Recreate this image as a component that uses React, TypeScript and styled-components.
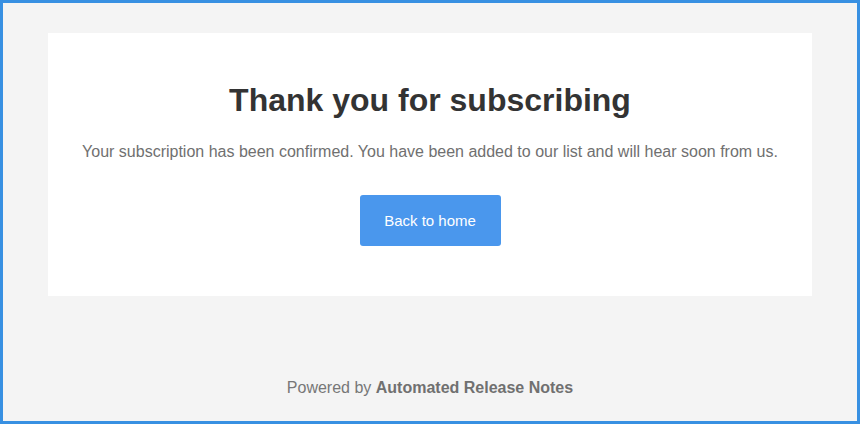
import React from "react";
import styled, { createGlobalStyle } from "styled-components";

const Global = createGlobalStyle`
  html, body { margin: 0; padding: 0; }
  body { font-family: "Liberation Sans", Arial, sans-serif; background: #f4f4f4; }
  * { box-sizing: border-box; }
`;

const Frame = styled.div`
  width: 860px;
  height: 424px;
  border: 3px solid #3890e2;
  background: #f4f4f4;
  display: flex;
  flex-direction: column;
  align-items: center;
  padding: 30px 45px 0;
`;

const Card = styled.div`
  width: 764px;
  height: 263px;
  background: #ffffff;
  display: flex;
  flex-direction: column;
  align-items: center;
  padding-top: 47px;
`;

const Title = styled.h1`
  margin: 0;
  font-size: 32px;
  line-height: 40px;
  font-weight: 700;
  color: #333333;
`;

const Message = styled.p`
  margin: 21px 0 0;
  font-size: 16px;
  line-height: 22px;
  color: #707070;
`;

const HomeButton = styled.a`
  margin-top: 32px;
  width: 141px;
  height: 51px;
  display: flex;
  align-items: center;
  justify-content: center;
  background: #4a97ed;
  color: #ffffff;
  border-radius: 3px;
  font-size: 15px;
  text-decoration: none;
`;

const Footer = styled.div`
  margin-top: 82px;
  font-size: 16px;
  line-height: 20px;
  color: #777777;
  strong { font-weight: 700; color: #707070; }
`;

export default function App() {
  return (
    <>
      <Global />
      <Frame>
        <Card>
          <Title>Thank you for subscribing</Title>
          <Message>
            Your subscription has been confirmed. You have been added to our list and will hear soon from us.
          </Message>
          <HomeButton href="#">Back to home</HomeButton>
        </Card>
        <Footer>
          Powered by <strong>Automated Release Notes</strong>
        </Footer>
      </Frame>
    </>
  );
}
